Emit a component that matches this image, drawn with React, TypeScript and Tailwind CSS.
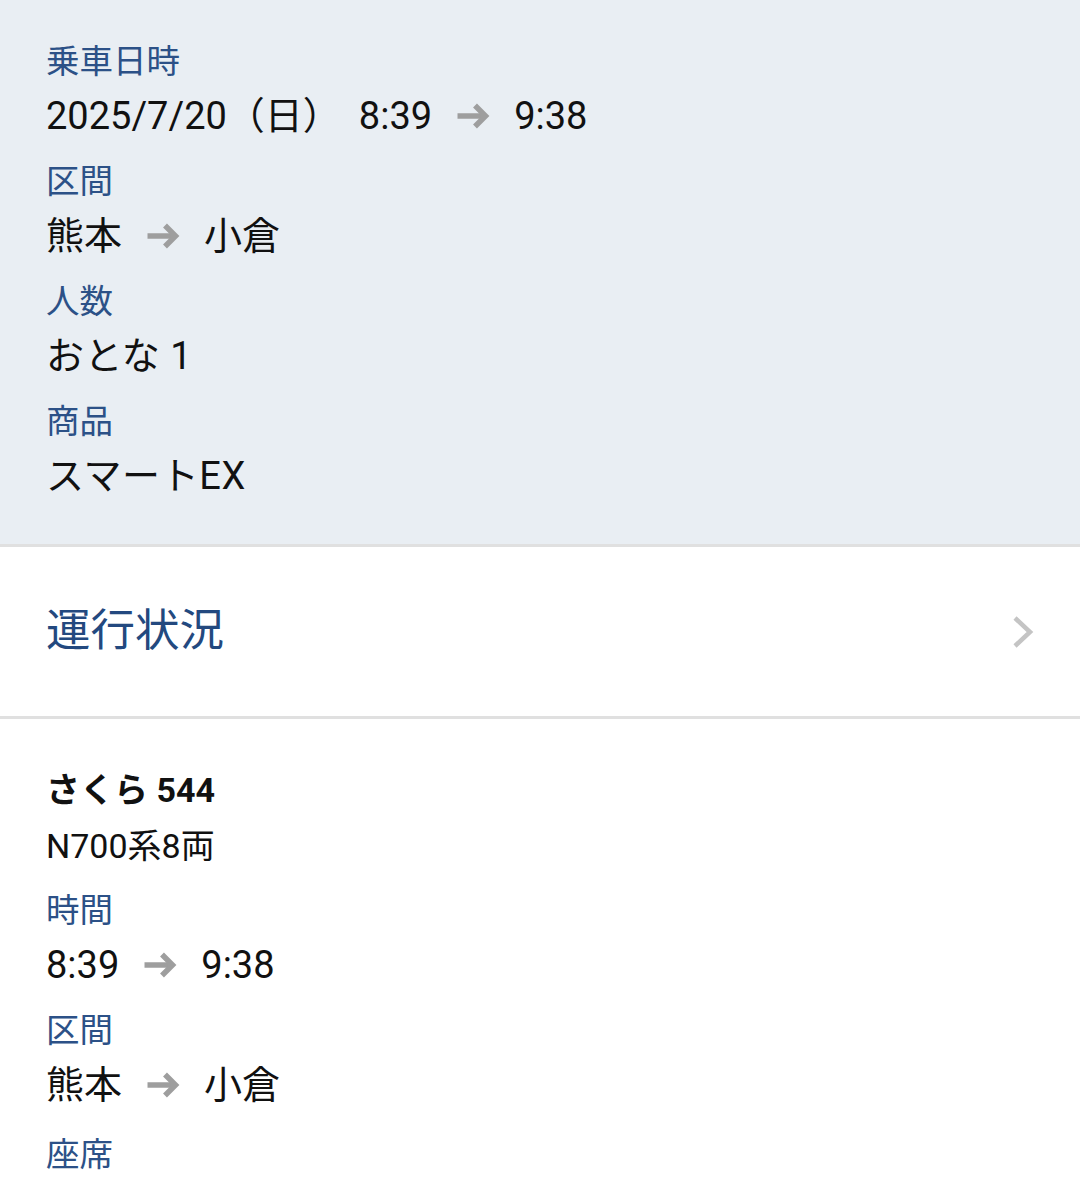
import React from "react";

const FONT = { fontFamily: 'Roboto, "Noto Sans CJK JP", "Noto Sans", sans-serif' };

function Arrow() {
  return (
    <svg width="34" height="28" viewBox="0 0 34 28" className="mx-[24px] shrink-0" fill="none">
      <path d="M1.5 14H29.5" stroke="#9e9e9e" strokeWidth="5.5" />
      <path d="M19 3.5L29.5 14L19 24.5" stroke="#9e9e9e" strokeWidth="5.5" />
    </svg>
  );
}

function Label({ children, className = "" }: { children: React.ReactNode; className?: string }) {
  return (
    <div className={`text-[33.5px] leading-[44px] h-[44px] text-[#2c5187] whitespace-nowrap ${className}`}>{children}</div>
  );
}

function Value({ children, className = "" }: { children: React.ReactNode; className?: string }) {
  return (
    <div className={`flex items-center text-[38px] leading-[48px] h-[48px] mt-[8px] text-[#111111] whitespace-nowrap ${className}`}>
      {children}
    </div>
  );
}

export default function App() {
  return (
    <div className="w-[1080px] h-[1188px] overflow-hidden bg-white" style={FONT}>
      {/* Summary section */}
      <div className="bg-[#e9eef3] px-[46px] pt-[40px] pb-[44px]">
        <Label>乗車日時</Label>
        <Value>
          <span>2025/7/20（日）</span>
          <span className="ml-[18px]">8:39</span>
          <Arrow />
          <span>9:38</span>
        </Value>

        <Label className="mt-[20px]">区間</Label>
        <Value>
          <span>熊本</span>
          <Arrow />
          <span>小倉</span>
        </Value>

        <Label className="mt-[20px]">人数</Label>
        <Value>
          <span className="tracking-[0.5px]">おとな 1</span>
        </Value>

        <Label className="mt-[20px]">商品</Label>
        <Value>
          <span className="tracking-[0.6px]">スマートEX</span>
        </Value>
      </div>

      <div className="h-[3px] bg-[#e0e0e0]" />

      {/* Operation status row */}
      <div className="h-[169px] px-[46px] flex items-center justify-between bg-white">
        <span className="text-[44.5px] text-[#23497f] leading-none">運行状況</span>
        <svg width="22" height="34" viewBox="0 0 22 34" fill="none">
          <path d="M3 3L18 17L3 31" stroke="#c4c4c4" strokeWidth="4.5" />
        </svg>
      </div>

      <div className="h-[3px] bg-[#e0e0e0]" />

      {/* Train detail */}
      <div className="bg-white px-[46px] pt-[49px]">
        <div className="text-[34px] leading-[44px] h-[44px] font-bold text-[#111111] whitespace-nowrap">
          さくら 544
        </div>
        <div className="text-[34px] leading-[44px] h-[44px] mt-[12px] text-[#111111] whitespace-nowrap">
          N700系8両
        </div>

        <Label className="mt-[21px]">時間</Label>
        <Value>
          <span>8:39</span>
          <Arrow />
          <span>9:38</span>
        </Value>

        <Label className="mt-[20px]">区間</Label>
        <Value>
          <span>熊本</span>
          <Arrow />
          <span>小倉</span>
        </Value>

        <Label className="mt-[24px]">座席</Label>
      </div>
    </div>
  );
}
